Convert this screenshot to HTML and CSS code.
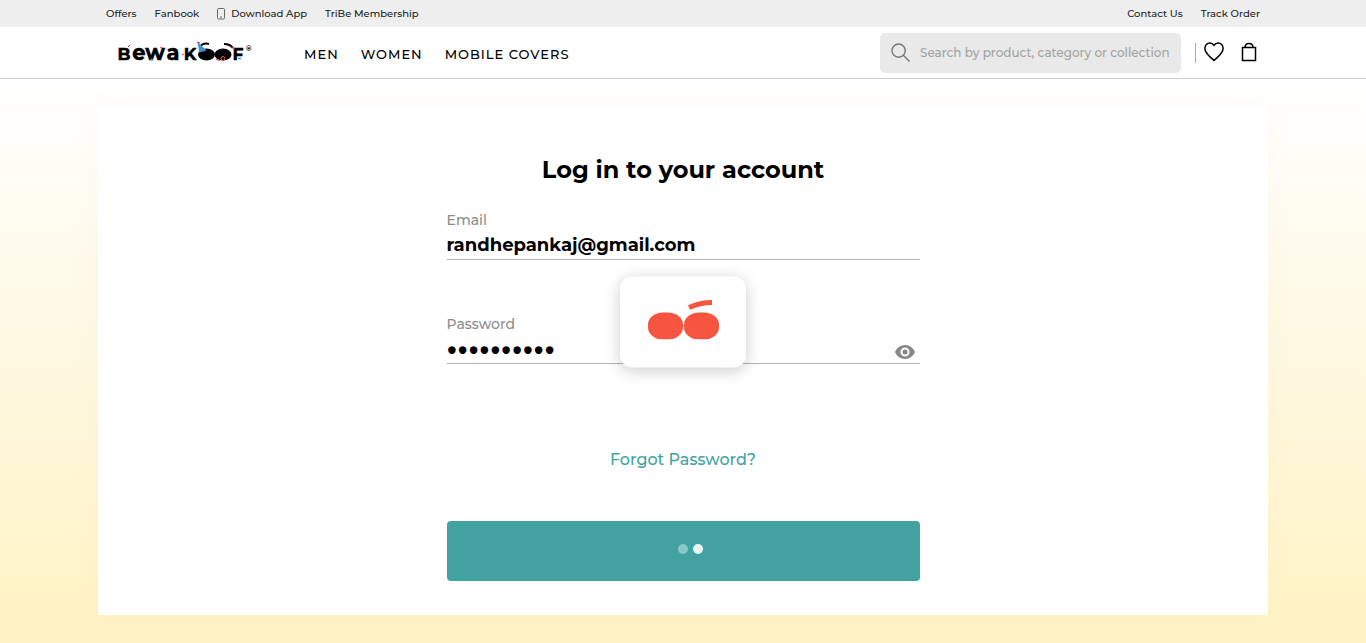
FILE: index.html
```html
<!DOCTYPE html>
<html lang="en">
<head>
<meta charset="utf-8">
<meta name="viewport" content="width=device-width, initial-scale=1">
<title>Bewakoof - Log in</title>
<link rel="stylesheet" href="styles.css">
</head>
<body>
<header class="site-header">
  <div class="topbar">
    <div class="wrap topbar-row">
      <nav class="links" aria-label="Shortcuts">
        <a href="#">Offers</a>
        <a href="#">Fanbook</a>
        <a href="#" class="app-link">
          <svg class="phone" viewBox="0 0 8 12" aria-hidden="true"><rect x=".5" y=".5" width="7" height="10.5" rx="1.2"/><path d="M3 9h2"/></svg>
          Download App</a>
        <a href="#">TriBe Membership</a>
      </nav>
      <nav class="links" aria-label="Help">
        <a href="#">Contact Us</a>
        <a href="#">Track Order</a>
      </nav>
    </div>
  </div>
  <div class="wrap mainbar">
    <a href="#" class="logo" aria-label="Bewakoof home">
      <svg viewBox="0 0 136 32" role="img" aria-label="Bewakoof">
        <g class="logo-text">
          <text x="6" y="23" font-size="17">B</text>
          <text x="21" y="23" font-size="21">e</text>
          <text x="37" y="23" font-size="21">w</text>
          <text x="55" y="23" font-size="21">a</text>
          <text x="72" y="23" font-size="17">K</text>
          <text x="120" y="23" font-size="17">F</text>
        </g>
        <ellipse cx="88.500" cy="17.500" rx="8.500" ry="6"/>
        <ellipse cx="105" cy="17.500" rx="8.500" ry="6"/>
        <path d="M83 8.500q3-3 8-1.500" class="brow"/>
        <path d="M106 7q6 0 9 4" class="brow"/>
        <path d="M79.500 5l9 8.500-7 2z" fill="#3f8fd0"/>
        <path d="M79 5l3 1M10 10l2-2M42 11l2-1M64 17l2 1M114 10l3 2M98 22l4 1.500" class="red"/>
        <path d="M33 22l2 1M120 21.500l3 0" stroke="#3f8fd0" stroke-width="1.500"/>
        <circle cx="105" cy="21.500" r="2" fill="none" stroke="#e8653a"/>
        <text x="128" y="14" class="reg">®</text>
      </svg>
    </a>
    <nav class="menu" aria-label="Main">
      <a href="#">MEN</a>
      <a href="#">WOMEN</a>
      <a href="#">MOBILE COVERS</a>
    </nav>
    <form class="search" role="search">
      <svg viewBox="0 0 20 20" aria-hidden="true"><circle cx="8" cy="8" r="7"/><path d="M13 13L19.500 19.500"/></svg>
      <input type="text" aria-label="Search" placeholder="Search by product, category or collection">
    </form>
    <div class="actions">
      <a href="#" aria-label="Wishlist"><svg class="heart" viewBox="0 0 20 20" aria-hidden="true"><path d="M10 18.500C6 14.500.9 11.500.9 6.500C.9 3.200 3.200 1 5.700 1C7.800 1 9.300 2.200 10 3.200C10.700 2.200 12.200 1 14.300 1C16.800 1 19.100 3.200 19.100 6.500C19.100 11.500 14 14.500 10 18.500Z"/></svg></a>
      <a href="#" aria-label="Bag"><svg class="bag" viewBox="0 0 16 20" aria-hidden="true"><path d="M1.500 5.500h13v13h-13z"/><path d="M4 5.500C4 0 12 0 12 5.500"/></svg></a>
    </div>
  </div>
</header>
<main class="page">
  <section class="card">
    <form class="login">
      <h1>Log in to your account</h1>
      <div class="field">
        <label for="email">Email</label>
        <input id="email" type="email" value="randhepankaj@gmail.com">
      </div>
      <div class="field">
        <label for="password">Password</label>
        <div class="password-row">
          <input id="password" type="password" value="abcdefghij">
          <button type="button" class="eye" aria-label="Show password">
            <svg viewBox="0 0 20 14" aria-hidden="true"><path fill-rule="evenodd" d="M10 0C5.500 0 1.600 2.900 0 7c1.600 4.100 5.500 7 10 7s8.400-2.900 10-7c-1.600-4.100-5.500-7-10-7zm0 11.600a4.600 4.600 0 1 1 0-9.200 4.600 4.600 0 0 1 0 9.200z"/><circle cx="10" cy="7" r="2.500"/></svg>
          </button>
        </div>
      </div>
      <a href="#" class="forgot">Forgot Password?</a>
      <button type="submit" class="submit" aria-label="Log in"><span class="dot"></span><span class="dot bright"></span></button>
    </form>
  </section>
</main>
<div class="loader" role="status" aria-label="Loading">
  <svg viewBox="0 0 71 40" aria-hidden="true"><rect x="0" y="13" width="35" height="27" rx="15" ry="12"/><rect x="36" y="13" width="35" height="27" rx="15" ry="12"/><path d="M34 26h3" class="bridge"/><path d="M41 8Q52 3 64 3" class="loader-brow"/></svg>
</div>
</body>
</html>
```
FILE: styles.css
```css
* { box-sizing: border-box; }
body {
  margin: 0;
  min-height: 100vh;
  display: flex;
  flex-direction: column;
  font-family: Montserrat, Inter, "Noto Sans", sans-serif;
  font-weight: 500;
  color: #000;
  background: #fff;
}
a { color: inherit; text-decoration: none; }
svg { display: block; }
input, button { font: inherit; }
.wrap { width: 100%; max-width: 1170px; margin: 0 auto; }
.topbar { background: #eee; color: #222; }
.topbar-row {
  display: flex;
  justify-content: space-between;
  align-items: center;
  height: 27px;
  padding: 0 8px;
  font-size: 10px;
}
.links { display: flex; align-items: center; gap: 18px; }
.app-link { display: flex; align-items: center; gap: 6px; }
.phone { width: 8px; height: 12px; fill: none; stroke: #666; }
.site-header { border-bottom: 1px solid #ccc; background: #fff; }
.mainbar { display: flex; align-items: center; height: 51px; padding: 0 11px 0 20px; }
.logo svg { width: 136px; height: 32px; overflow: visible; }
.logo-text { font-weight: 700; text-anchor: middle; stroke: #000; stroke-width: .5; }
.brow { fill: none; stroke: #000; stroke-width: 2; }
.red { stroke: #e23; stroke-width: 1; }
.reg { font-size: 7px; font-weight: 700; }
.menu { display: flex; gap: 22px; margin-left: 50px; padding-top: 2px; font-size: 13px; letter-spacing: 1px; }
.search {
  display: flex;
  align-items: center;
  gap: 10px;
  width: 301px;
  height: 40px;
  margin-left: auto;
  padding: 0 8px 0 11px;
  border-radius: 5px;
  background: #e9e9e9;
}
.search svg { flex: none; width: 19px; height: 19px; fill: none; stroke: #777; stroke-width: 1.5; }
.search input {
  flex: 1;
  min-width: 0;
  padding: 0;
  border: 0;
  background: none;
  font-size: 12px;
  outline: none;
}
.search input::placeholder { color: #a2a2a2; opacity: 1; }
.actions {
  display: flex;
  align-items: center;
  gap: 17px;
  height: 20px;
  margin-left: 14px;
  padding: 0 0 2px 8px;
  border-left: 1px solid #aaa;
}
.heart, .bag { height: 20px; fill: none; stroke: #000; stroke-width: 1.5; }
.heart { width: 20px; }
.bag { width: 16px; }
.page { flex: 1; padding: 28px 16px; background: linear-gradient(#fff, #fff2c2); }
.card {
  max-width: 1170px;
  margin: 0 auto;
  padding: 45px 16px 34px;
  background: #fff;
  box-shadow: 0 0 30px rgba(150, 130, 130, .04);
}
.login { display: flex; flex-direction: column; max-width: 473px; margin: 0 auto; }
h1 { margin: 0 0 23px; text-align: center; font-size: 24px; line-height: 36px; font-weight: 700; }
.field { display: flex; flex-direction: column; height: 49px; margin-bottom: 55px; border-bottom: 1px solid #b2b2b2; }
.field label { color: #8c8c8c; font-size: 14px; line-height: 18px; }
.field input { width: 100%; height: 32px; padding: 2px 0 0; border: 0; background: none; color: #000; font-size: 18px; font-weight: 700; outline: none; }
.password-row { display: flex; align-items: center; height: 30px; padding-right: 5px; }
.field .password-row input { height: 30px; padding: 0; font-size: 30px; }
.eye { flex: none; padding: 8px 0 0; border: 0; background: none; }
.eye svg { width: 20px; height: 14px; fill: #878787; }
.forgot { align-self: center; margin: 28px 0 48px; color: #42a2a2; font-size: 16px; line-height: 26px; }
.submit {
  display: flex;
  justify-content: center;
  align-items: center;
  gap: 5px;
  height: 60px;
  padding: 0 0 4px 15px;
  border: 0;
  border-radius: 4px;
  background: #42a2a2;
}
.dot { width: 10px; height: 10px; border-radius: 50%; background: #8dc7c7; }
.bright { background: #e8f4f4; }
.loader {
  position: fixed;
  top: 50%;
  left: 50%;
  transform: translate(-50%, -50%);
  padding: 23px 27px 28px 28px;
  border-radius: 12px;
  background: #fff;
  box-shadow: 0 3px 16px rgba(0, 0, 0, .2);
}
.loader svg { width: 71px; height: 40px; fill: #f75540; }
.bridge { stroke: #f75540; stroke-width: 1; }
.loader-brow { fill: none; stroke: #f75540; stroke-width: 5; }
```
